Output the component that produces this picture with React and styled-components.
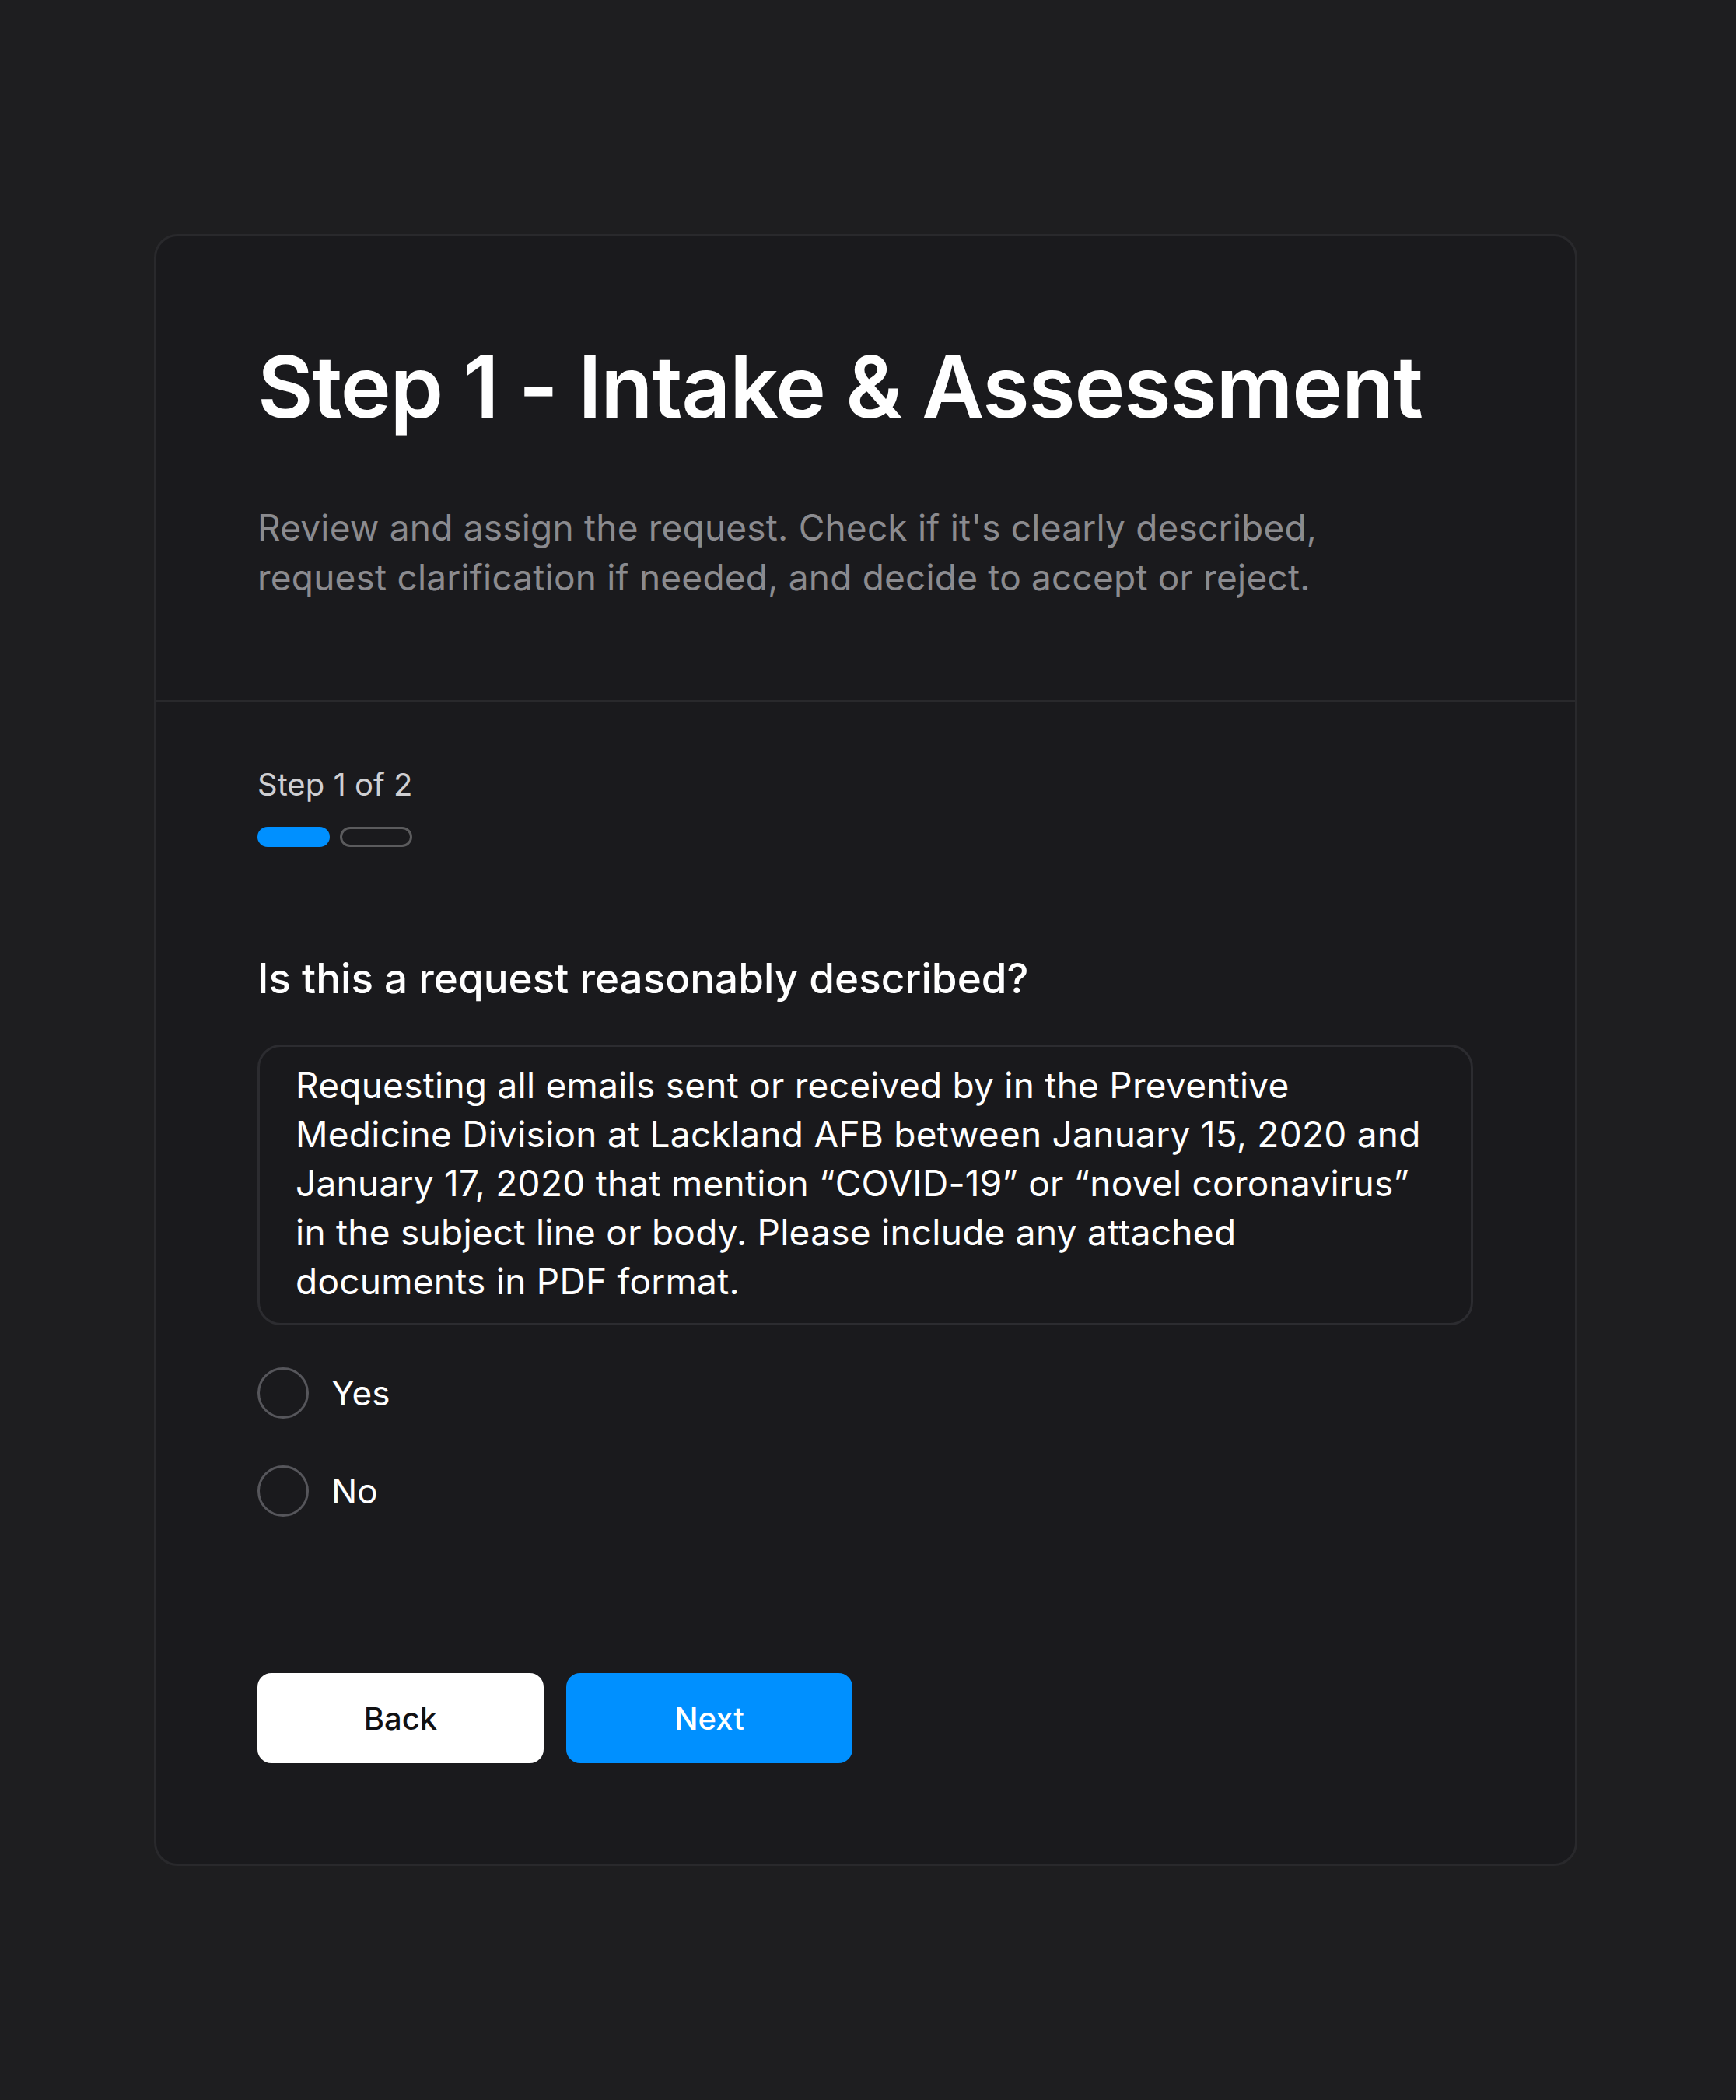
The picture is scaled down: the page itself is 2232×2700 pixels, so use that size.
import React, { useState } from 'react'
import styled, { createGlobalStyle } from 'styled-components'

const GlobalStyle = createGlobalStyle`
  * { box-sizing: border-box; }
  html, body {
    margin: 0;
    padding: 0;
    background: #1e1e20;
    font-family: Inter, "Noto Sans", "Liberation Sans", sans-serif;
    -webkit-font-smoothing: antialiased;
  }
`

const Page = styled.div`
  min-height: 100vh;
  display: flex;
  align-items: center;
  justify-content: center;
  padding-right: 6px;
`

const Card = styled.div`
  width: 1830px;
  background: #1a1a1d;
  border: 3px solid #29292c;
  border-radius: 30px;
  overflow: hidden;
`

const Header = styled.header`
  padding: 126px 130px 126px;
  border-bottom: 3px solid #29292c;
`

const Title = styled.h1`
  margin: 0;
  font-size: 110px;
  line-height: 134px;
  font-weight: 600;
  color: #ffffff;
  letter-spacing: -1.3px;
`

const Subtitle = styled.p`
  margin: 82px 0 0;
  font-size: 46px;
  line-height: 64px;
  letter-spacing: 0.2px;
  color: #8b8b8f;
`

const Body = styled.section`
  padding: 82px 130px 129px;
`

const StepLabel = styled.div`
  font-size: 40px;
  line-height: 48px;
  color: #cfcfd2;
`

const Progress = styled.div`
  display: flex;
  gap: 13px;
  margin-top: 30px;
`

const Segment = styled.div`
  width: 93px;
  height: 26px;
  border-radius: 13px;
  background: ${(p) => (p.$done ? '#0090ff' : 'transparent')};
  border: ${(p) => (p.$done ? 'none' : '3px solid #5b5b5d')};
`

const Question = styled.h2`
  margin: 137px 0 0;
  font-size: 53px;
  line-height: 65px;
  font-weight: 500;
  color: #ffffff;
`

const RequestBox = styled.div`
  margin-top: 52px;
  width: 1563px;
  padding: 18px 46px 22px;
  border: 3px solid #2c2c30;
  border-radius: 30px;
  background: #19191c;
  font-size: 46px;
  line-height: 63px;
  letter-spacing: 0.25px;
  color: #ffffff;
  white-space: nowrap;
`

const Options = styled.div`
  display: flex;
  flex-direction: column;
  gap: 60px;
  margin-top: 54px;
`

const Option = styled.label`
  display: flex;
  align-items: center;
  gap: 29px;
  height: 66px;
  font-size: 44px;
  color: #ffffff;
  cursor: pointer;
`

const Radio = styled.span`
  width: 66px;
  height: 66px;
  border-radius: 50%;
  border: 3px solid #56565b;
  display: flex;
  align-items: center;
  justify-content: center;
  flex-shrink: 0;

  &::after {
    content: '';
    width: 30px;
    height: 30px;
    border-radius: 50%;
    background: #0090ff;
    display: ${(p) => (p.$checked ? 'block' : 'none')};
  }
`

const Actions = styled.div`
  display: flex;
  gap: 29px;
  margin-top: 201px;
`

const Button = styled.button`
  width: 368px;
  height: 116px;
  border: none;
  border-radius: 18px;
  font-family: inherit;
  font-size: 40px;
  font-weight: 500;
  cursor: pointer;
  background: ${(p) => (p.$primary ? '#0090ff' : '#ffffff')};
  color: ${(p) => (p.$primary ? '#ffffff' : '#111113')};
`

const App = () => {
  const [answer, setAnswer] = useState(null)

  return (
    <>
      <GlobalStyle />
      <Page>
        <Card>
          <Header>
            <Title>Step 1 - Intake &amp; Assessment</Title>
            <Subtitle>
              Review and assign the request. Check if it's clearly described,
              <br />
              request clarification if needed, and decide to accept or reject.
            </Subtitle>
          </Header>
          <Body>
            <StepLabel>Step 1 of 2</StepLabel>
            <Progress>
              <Segment $done />
              <Segment />
            </Progress>
            <Question>Is this a request reasonably described?</Question>
            <RequestBox>
              Requesting all emails sent or received by in the Preventive
              <br />
              Medicine Division at Lackland AFB between January 15, 2020 and
              <br />
              January 17, 2020 that mention “COVID-19” or “novel coronavirus”
              <br />
              in the subject line or body. Please include any attached
              <br />
              documents in PDF format.
            </RequestBox>
            <Options>
              <Option onClick={() => setAnswer('yes')}>
                <Radio $checked={answer === 'yes'} />
                Yes
              </Option>
              <Option onClick={() => setAnswer('no')}>
                <Radio $checked={answer === 'no'} />
                No
              </Option>
            </Options>
            <Actions>
              <Button>Back</Button>
              <Button $primary>Next</Button>
            </Actions>
          </Body>
        </Card>
      </Page>
    </>
  )
}

export default App
